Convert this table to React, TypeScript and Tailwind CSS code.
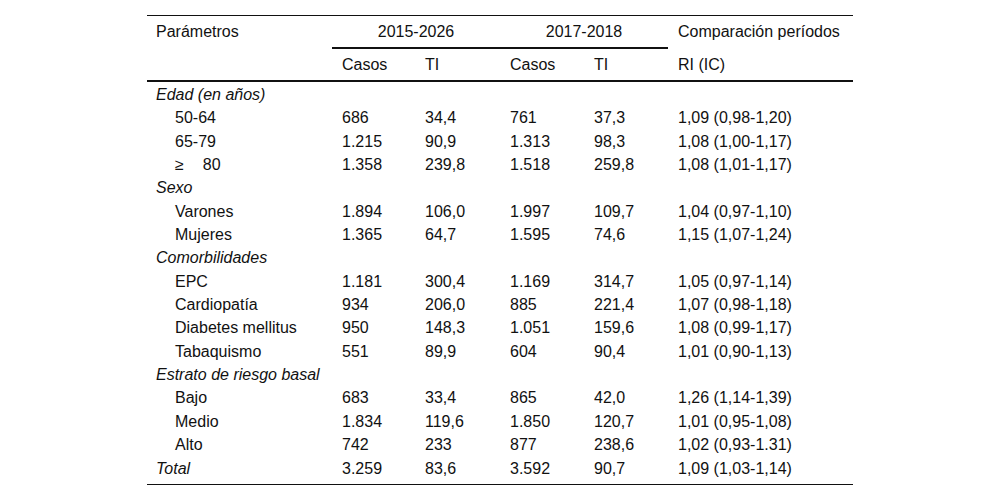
import React from "react";

type Row =
  | { kind: "group"; label: string }
  | { kind: "item"; label: React.ReactNode; c1: string; t1: string; c2: string; t2: string; ri: string; italic?: boolean; indent?: boolean };

const rows: Row[] = [
  { kind: "group", label: "Edad (en años)" },
  { kind: "item", label: "50-64", c1: "686", t1: "34,4", c2: "761", t2: "37,3", ri: "1,09 (0,98-1,20)", indent: true },
  { kind: "item", label: "65-79", c1: "1.215", t1: "90,9", c2: "1.313", t2: "98,3", ri: "1,08 (1,00-1,17)", indent: true },
  {
    kind: "item",
    label: (
      <>
        ≥<span className="ml-[19px]">80</span>
      </>
    ),
    c1: "1.358",
    t1: "239,8",
    c2: "1.518",
    t2: "259,8",
    ri: "1,08 (1,01-1,17)",
    indent: true,
  },
  { kind: "group", label: "Sexo" },
  { kind: "item", label: "Varones", c1: "1.894", t1: "106,0", c2: "1.997", t2: "109,7", ri: "1,04 (0,97-1,10)", indent: true },
  { kind: "item", label: "Mujeres", c1: "1.365", t1: "64,7", c2: "1.595", t2: "74,6", ri: "1,15 (1,07-1,24)", indent: true },
  { kind: "group", label: "Comorbilidades" },
  { kind: "item", label: "EPC", c1: "1.181", t1: "300,4", c2: "1.169", t2: "314,7", ri: "1,05 (0,97-1,14)", indent: true },
  { kind: "item", label: "Cardiopatía", c1: "934", t1: "206,0", c2: "885", t2: "221,4", ri: "1,07 (0,98-1,18)", indent: true },
  { kind: "item", label: "Diabetes mellitus", c1: "950", t1: "148,3", c2: "1.051", t2: "159,6", ri: "1,08 (0,99-1,17)", indent: true },
  { kind: "item", label: "Tabaquismo", c1: "551", t1: "89,9", c2: "604", t2: "90,4", ri: "1,01 (0,90-1,13)", indent: true },
  { kind: "group", label: "Estrato de riesgo basal" },
  { kind: "item", label: "Bajo", c1: "683", t1: "33,4", c2: "865", t2: "42,0", ri: "1,26 (1,14-1,39)", indent: true },
  { kind: "item", label: "Medio", c1: "1.834", t1: "119,6", c2: "1.850", t2: "120,7", ri: "1,01 (0,95-1,08)", indent: true },
  { kind: "item", label: "Alto", c1: "742", t1: "233", c2: "877", t2: "238,6", ri: "1,02 (0,93-1.31)", indent: true },
  { kind: "item", label: "Total", c1: "3.259", t1: "83,6", c2: "3.592", t2: "90,7", ri: "1,09 (1,03-1,14)", italic: true },
];

const cell = "pl-[10px] leading-[23.35px] h-[23.35px] whitespace-nowrap";

export default function App() {
  return (
    <div className="w-[1000px] h-[500px] bg-white text-[#111] text-[16px] font-['Liberation_Sans',Arial,sans-serif] pt-[15px]">
      <div className="mx-auto w-[706px] border-t border-[#111] border-b pb-[4px]">
        <div className="grid grid-cols-[185px_84px_84px_84px_84px_185px]">
          {/* header row 1 */}
          <div className="pl-[9px] pt-[4px] h-[33px]">Parámetros</div>
          <div className="col-span-2 text-center pt-[4px] h-[33px] border-b-2 border-[#111]">2015-2026</div>
          <div className="col-span-2 text-center pt-[4px] h-[33px] border-b-2 border-[#111]">2017-2018</div>
          <div className="pl-[10px] pt-[4px] h-[33px]">Comparación períodos</div>

          {/* header row 2 */}
          <div className="h-[33px] border-b-2 border-[#111]" />
          <div className="pl-[10px] pt-[4px] h-[33px] border-b-2 border-[#111]">Casos</div>
          <div className="pl-[9px] pt-[4px] h-[33px] border-b-2 border-[#111]">TI</div>
          <div className="pl-[10px] pt-[4px] h-[33px] border-b-2 border-[#111]">Casos</div>
          <div className="pl-[10px] pt-[4px] h-[33px] border-b-2 border-[#111]">TI</div>
          <div className="pl-[10px] pt-[4px] h-[33px] border-b-2 border-[#111]">RI (IC)</div>

          {/* spacer so the body starts one pixel below the rule */}
          <div className="col-span-6 h-[1px]" />

          {rows.map((r, i) =>
            r.kind === "group" ? (
              <div key={i} className="col-span-6 pl-[9px] italic leading-[23.35px] h-[23.35px]">
                {r.label}
              </div>
            ) : (
              <React.Fragment key={i}>
                <div className={`${r.indent ? "pl-[28px]" : "pl-[9px]"} ${r.italic ? "italic" : ""} leading-[23.35px] h-[23.35px] whitespace-nowrap`}>
                  {r.label}
                </div>
                <div className={cell}>{r.c1}</div>
                <div className="pl-[9px] leading-[23.35px] h-[23.35px]">{r.t1}</div>
                <div className={cell}>{r.c2}</div>
                <div className={cell}>{r.t2}</div>
                <div className={cell}>{r.ri}</div>
              </React.Fragment>
            )
          )}
        </div>
      </div>
    </div>
  );
}
